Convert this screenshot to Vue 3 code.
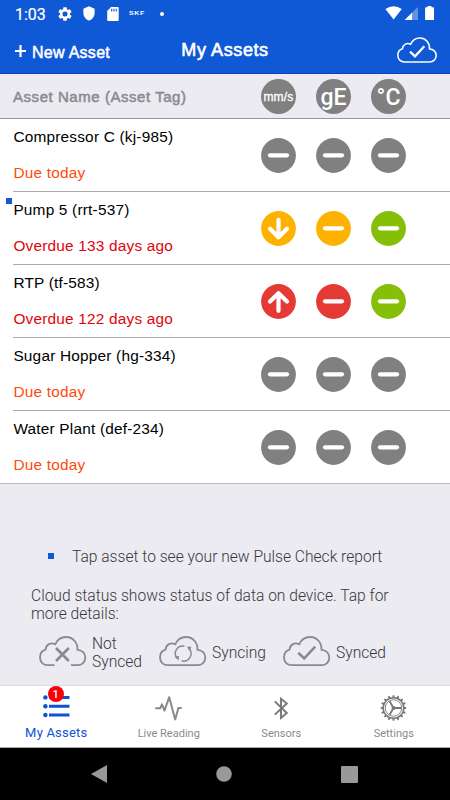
<script setup>
const assets = [
  { name: 'Compressor C (kj-985)', due: 'Due today', late: false, fresh: false, marks: ['gray minus', 'gray minus', 'gray minus'] },
  { name: 'Pump 5 (rrt-537)', due: 'Overdue 133 days ago', late: true, fresh: true, marks: ['amber down', 'amber minus', 'green minus'] },
  { name: 'RTP (tf-583)', due: 'Overdue 122 days ago', late: true, fresh: false, marks: ['red up', 'red minus', 'green minus'] },
  { name: 'Sugar Hopper (hg-334)', due: 'Due today', late: false, fresh: false, marks: ['gray minus', 'gray minus', 'gray minus'] },
  { name: 'Water Plant (def-234)', due: 'Due today', late: false, fresh: false, marks: ['gray minus', 'gray minus', 'gray minus'] },
]
const glyphs = {
  minus: 'M9 17.3H26',
  down: 'M17.5 8.8V26M9 17.8L17.5 26.2L26 17.8',
  up: 'M17.5 26.8V9.4M9 17.6L17.5 9.2L26 17.6',
}
const glyphOf = (mark) => glyphs[mark.split(' ')[1]]
const cloud = 'M9 29.2C4.2 29.2 1 26 1 21.5C1 17.5 3.3 14.5 6.5 13.6C7 8.4 12 6 16.2 8.3C18.3 3.5 22.5 1 27 1C34 1 38.8 6.7 38.5 13.8C43 14 46.3 17.3 46.3 21.5C46.3 26 43 29.2 38.5 29.2Z'
const openCloud = 'M15.5 29.2H9C4.2 29.2 1 26 1 21.5C1 17.5 3.3 14.5 6.5 13.6C7 8.4 12 6 16.2 8.3C18.3 3.5 22.5 1 27 1C34 1 38.8 6.7 38.5 13.8C43 14 46.3 17.3 46.3 21.5C46.3 26 43 29.2 38.5 29.2H32'
const teeth = Array.from({ length: 16 }, (_, i) => `rotate(${i * 22.5} 13 13)`)
</script>

<template>
  <div class="screen">
    <header class="top">
      <div class="status">
        <span class="clock">1:03</span>
        <svg class="gear" width="14" height="14" viewBox="2 2 20 20"><path fill="#fff" d="M19.14 12.94c.04-.3.06-.61.06-.94 0-.32-.02-.64-.07-.94l2.03-1.58c.18-.14.23-.41.12-.61l-1.92-3.32c-.12-.22-.37-.29-.59-.22l-2.39.96c-.5-.38-1.03-.7-1.62-.94l-.36-2.54c-.04-.24-.24-.41-.48-.41h-3.84c-.24 0-.43.17-.47.41l-.36 2.54c-.59.24-1.13.57-1.62.94l-2.39-.96c-.22-.08-.47 0-.59.22L2.74 8.87c-.12.21-.08.47.12.61l2.03 1.58c-.05.3-.09.63-.09.94s.02.64.07.94l-2.03 1.58c-.18.14-.23.41-.12.61l1.92 3.32c.12.22.37.29.59.22l2.39-.96c.5.38 1.03.7 1.62.94l.36 2.54c.05.24.24.41.48.41h3.84c.24 0 .44-.17.47-.41l.36-2.54c.59-.24 1.13-.56 1.62-.94l2.39.96c.22.08.47 0 .59-.22l1.92-3.32c.12-.22.07-.47-.12-.61l-2.01-1.58zM12 15.6A3.6 3.6 0 1 1 12 8.4a3.6 3.6 0 0 1 0 7.2z" /></svg>
        <svg class="shield" width="12" height="15" viewBox="0 0 12 15"><path fill="#fff" d="M6 .3L11.6 2.7V7C11.6 10.6 9.2 13.6 6 14.6C2.8 13.6.4 10.6.4 7V2.7Z" /></svg>
        <svg class="card" width="12" height="14" viewBox="0 0 12 14"><path fill="#fff" d="M4 0H10.7Q11.7 0 11.7 1V13Q11.7 14 10.7 14H1.2Q.2 14 .2 13V4Z" /><path stroke="#0f58d6" stroke-width="1.1" d="M4.7 1.8V4.4M7 1.8V4.4M9.3 1.8V4.4" /></svg>
        <span class="brand">SKF</span>
        <span class="dot"></span>
        <span class="grow"></span>
        <svg class="signals" width="50" height="15" viewBox="0 0 50 15">
          <path fill="#fff" d="M.4 3Q8.5-2.6 16.8 3L8.6 13.4Z" />
          <path fill="#fff" d="M19.6 14L27.2 6.6V14Z" /><path fill="#fff" opacity=".35" d="M27.2 6.6L33 1V14H27.2Z" />
          <path fill="#fff" d="M42.5 0H46.5V1.3H48.1Q49 1.3 49 2.2V13.2Q49 14.1 48.1 14.1H41Q40.1 14.1 40.1 13.2V2.2Q40.1 1.3 41 1.3H42.5Z" />
        </svg>
      </div>
      <div class="bar">
        <div class="new">
          <svg width="11" height="12" viewBox="0 0 11 12"><path stroke="#fff" stroke-width="2.2" d="M5.5 0V12M0 6H11" /></svg>
          <span>New Asset</span>
        </div>
        <h1>My Assets</h1>
        <svg class="sync" width="40" height="26" viewBox="0 0 47.3 30.2"><g fill="none" stroke="#fff"><path stroke-width="1.8" :d="cloud" /><path stroke-width="2.6" d="M15.4 17L21.3 22.6L32.3 10.8" /></g></svg>
      </div>
    </header>

    <div class="heads">
      <span class="label">Asset Name (Asset Tag)</span>
      <div class="dials">
        <span class="dial small">mm/s</span><span class="dial">gE</span><span class="dial">°C</span>
      </div>
    </div>

    <ul class="list">
      <li v-for="a in assets" :key="a.name">
        <i v-if="a.fresh" class="fresh"></i>
        <div class="info"><p>{{ a.name }}</p><p class="due" :class="{ late: a.late }">{{ a.due }}</p></div>
        <div class="dials">
          <svg v-for="(m, i) in a.marks" :key="i" width="35" height="35" viewBox="0 0 35 35" :class="m">
            <circle cx="17.5" cy="17.5" r="17.4" fill="currentColor" />
            <path :d="glyphOf(m)" fill="none" stroke="#fff" stroke-width="4.2" stroke-linecap="round" stroke-linejoin="round" />
          </svg>
        </div>
      </li>
    </ul>

    <section class="help">
      <div class="tap"><i></i><span>Tap asset to see your new Pulse Check report</span></div>
      <p class="cloudtext">Cloud status shows status of data on device. Tap for<br>more details:</p>
      <div class="legend">
        <svg width="48" height="31" viewBox="0 0 48 31"><g fill="none" stroke="#8a8a8e"><path stroke-width="1.8" :d="openCloud" /><path stroke-width="2.6" d="M17 12L29.8 25M29.8 12L17 25" /></g></svg>
        <span class="a">Not<br>Synced</span>
        <svg width="48" height="31" viewBox="0 0 48 31"><g fill="none" stroke="#8a8a8e"><path stroke-width="1.8" :d="cloud" /><path stroke-width="1.5" d="M25.5 10.2A7.4 7.4 0 0 0 18.2 22.3M22.6 24.8A7.4 7.4 0 0 0 29.8 12.4" /></g><path fill="#8a8a8e" d="M15.6 20.6L20 20L19.6 24.6ZM28 10.6L32.5 10.8L30.4 14.9Z" /></svg>
        <span class="b">Syncing</span>
        <svg width="48" height="31" viewBox="0 0 48 31"><g fill="none" stroke="#8a8a8e"><path stroke-width="1.8" :d="cloud" /><path stroke-width="2.6" d="M15.3 16.8L21.2 22.4L32.2 10.6" /></g></svg>
        <span class="c">Synced</span>
      </div>
    </section>

    <nav class="tabs">
      <a class="on">
        <span class="iconbox">
          <svg width="27" height="26" viewBox="0 0 27 26"><g fill="#0f50d6"><circle cx="2.4" cy="2.4" r="2.2" /><circle cx="2.4" cy="11.2" r="2.2" /><circle cx="2.4" cy="20" r="2.2" /><path d="M6 .9H26.5V3.9H6ZM6 9.7H26.5V12.7H6ZM6 18.5H26.5V21.5H6Z" /></g></svg>
          <b>1</b>
        </span>
        <span>My Assets</span>
      </a>
      <a>
        <span class="iconbox"><svg width="27" height="26" viewBox="0 0 27 26"><path fill="none" stroke="#8a8a8e" stroke-width="2" stroke-linejoin="round" stroke-linecap="round" d="M1 13.2H5.2L7 9.4L9.5 15.6L14.2 2.2L20.2 24.4L23.4 13H26" /></svg></span>
        <span>Live Reading</span>
      </a>
      <a>
        <span class="iconbox"><svg width="27" height="26" viewBox="0 0 27 26"><path fill="none" stroke="#77777b" stroke-width="1.9" d="M6.8 6.4L18.8 18L13 23V3.7L18.8 8.5L6.8 19.6" /></svg></span>
        <span>Sensors</span>
      </a>
      <a>
        <span class="iconbox"><svg width="27" height="26" viewBox="0 0 26 26"><g fill="none" stroke="#77777b"><circle cx="13" cy="13" r="10.3" stroke-width="1.5" /><circle cx="13" cy="13" r="8.2" stroke-width=".9" /><path stroke-width="1.8" d="M13 13H21M13 13L9 6M13 13L9 20" /></g><circle cx="13" cy="13" r="2" fill="#77777b" /><path v-for="t in teeth" :key="t" :transform="t" fill="#77777b" d="M11.8 2.8L12.2 .2H13.8L14.2 2.8Z" /></svg></span>
        <span>Settings</span>
      </a>
    </nav>

    <footer class="system">
      <svg width="16" height="18" viewBox="0 0 16 18"><path fill="#999" d="M0 9L16 0V18Z" /></svg>
      <svg width="16" height="16" viewBox="0 0 16 16"><circle cx="8" cy="8" r="7.8" fill="#999" /></svg>
      <svg width="17" height="17" viewBox="0 0 17 17"><rect width="17" height="17" rx="1" fill="#999" /></svg>
    </footer>
  </div>
</template>

<style>
body { margin: 0; background: #ebebf1; }
</style>

<style scoped>
.screen { width: 450px; height: 800px; display: flex; flex-direction: column; overflow: hidden; background: #ebebf1; font-family: "Liberation Sans", Arial, sans-serif; }
svg { display: block; flex: none; }
p, h1, ul { margin: 0; padding: 0; }
.top { height: 74px; box-sizing: border-box; background: #0f58d6; border-bottom: 1px solid #0a3fc4; color: #fff; flex: none; }
.status { height: 27px; display: flex; align-items: center; padding: 0 15px 0 15px; }
.clock { font: 400 16px/27px Roboto, sans-serif; -webkit-text-stroke: .2px #fff; width: 43px; height: 26px; }
.gear { margin-right: 11px; }
.shield { margin-right: 12px; }
.card { margin-right: 10px; }
.brand { font: 700 7px/7px "Liberation Sans", sans-serif; width: 17px; transform: scaleY(.72); letter-spacing: .6px; }
.dot { width: 4px; height: 4px; border-radius: 50%; background: #fff; margin-left: 14px; }
.grow { flex: 1; }
.bar { height: 46px; display: grid; grid-template-columns: 150px 150px 150px; align-items: center; }
.new { display: flex; align-items: center; gap: 6px; padding: 5px 0 0 15px; font-size: 16px; letter-spacing: .27px; -webkit-text-stroke: .5px #fff; white-space: nowrap; }
.new svg { margin-top: -4px; }
h1 { font-size: 18px; font-weight: 400; letter-spacing: .6px; text-align: center; -webkit-text-stroke: .6px #fff; padding-top: 1px; }
.sync { justify-self: end; margin-right: 13px; }
.heads { height: 45px; box-sizing: border-box; border-bottom: 1px solid #96969a; display: flex; align-items: center; padding-left: 13px; flex: none; }
.label { width: 248px; font-size: 15px; letter-spacing: .55px; color: #8a8a8e; -webkit-text-stroke: .5px #8a8a8e; }
.dials { display: flex; gap: 20px; }
.dial { width: 35px; height: 35px; border-radius: 50%; background: #808080; color: #fff; font: 500 23px/38px Roboto, sans-serif; text-align: center; }
.dial.small { font: 400 12px/37px "Liberation Sans", sans-serif; letter-spacing: .2px; -webkit-text-stroke: .3px #fff; }
.list { list-style: none; background: #fff; height: 365px; flex: none; border-bottom: 1px solid #bcbcc0; box-sizing: border-box; }
.list li { height: 73px; box-sizing: border-box; margin-left: 13px; border-bottom: 1px solid #aaa; display: flex; align-items: center; position: relative; }
.list li:last-child { border-bottom: 0; height: 72px; }
.info { width: 247.6px; padding-left: .4px; font-size: 15.4px; line-height: 18px; letter-spacing: .2px; color: #000; white-space: nowrap; }
.due { margin-top: 18px; color: #ff4a0c; }
.late { color: #e0040b; }
.fresh { position: absolute; left: -7px; top: 6px; width: 6px; height: 6px; background: #0f58d6; }
.gray { color: #808080; }
.amber { color: #ffb100; }
.green { color: #85bf08; }
.red { color: #e53935; }
.help { flex: 1; padding-top: 63px; box-sizing: border-box; font-family: Roboto, sans-serif; font-weight: 300; font-size: 15.6px; line-height: 18px; color: #38383c; white-space: nowrap; }
.tap { display: flex; align-items: center; height: 20px; padding-left: 48px; }
.tap i { width: 6px; height: 6px; background: #0f58d6; margin: -2px 18px 0 0; }
.cloudtext { margin: 20px 0 0 31px; }
.legend { display: flex; align-items: center; height: 36px; margin: 12px 0 0 39px; }
.legend svg { margin-top: -4px; }
.legend span { margin-left: 5px; }
.legend .a { width: 67px; }
.legend .b { width: 71px; }
.tabs { height: 63px; box-sizing: border-box; border-top: 1px solid #dcdce0; border-bottom: 1px solid #aaa; background: #fff; display: grid; grid-template-columns: repeat(4, 1fr); flex: none; }
.tabs a { display: flex; flex-direction: column; align-items: center; padding-top: 9px; font: 400 11px/16px Roboto, sans-serif; color: #8a8a8e; }
.tabs a > span:last-child { margin-top: 5px; }
.tabs .on { color: #0f50d6; font-size: 13px; letter-spacing: .2px; }
.tabs .on > span:last-child { margin-top: 4px; }
.iconbox { position: relative; }
.iconbox b { position: absolute; left: 5px; top: -9px; width: 16px; height: 16px; border-radius: 50%; background: #f80008; color: #fff; font: 500 11px/17px Roboto, sans-serif; text-align: center; letter-spacing: 0; }
.system { height: 52px; background: #000; display: flex; align-items: center; justify-content: space-between; padding: 0 92.5px 0 91px; box-sizing: border-box; flex: none; }
</style>
